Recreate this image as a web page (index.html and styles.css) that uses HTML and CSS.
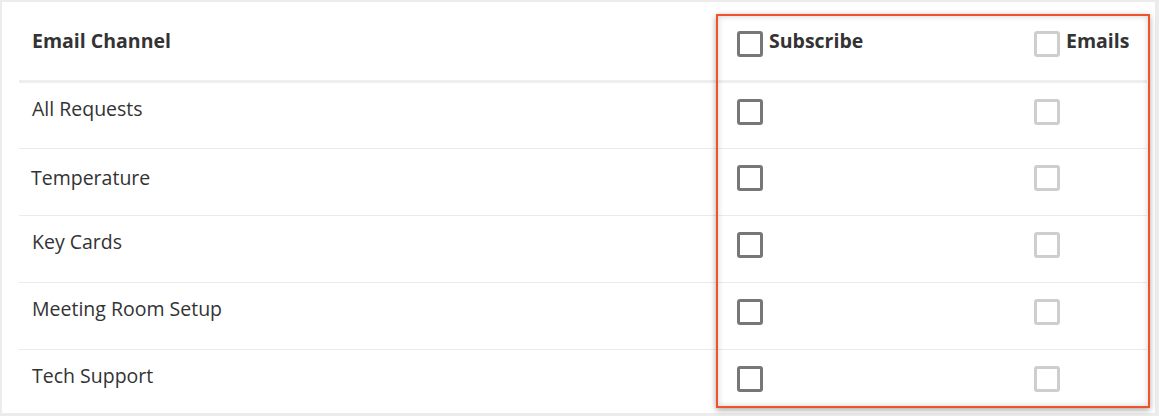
FILE: index.html
```html
<!DOCTYPE html>
<html>
<head>
<meta charset="utf-8">
<link rel="stylesheet" href="styles.css">
</head>
<body>
<div class="panel">
  <div class="table">
    <div class="row head">
      <div class="cell name">Email Channel</div>
      <div class="cell sub"><span class="box dark"></span><span class="label">Subscribe</span></div>
      <div class="cell em"><span class="box light"></span><span class="label">Emails</span></div>
    </div>
    <div class="row first">
      <div class="cell name">All Requests</div>
      <div class="cell sub"><span class="box dark"></span></div>
      <div class="cell em"><span class="box light"></span></div>
    </div>
    <div class="row second">
      <div class="cell name">Temperature</div>
      <div class="cell sub"><span class="box dark"></span></div>
      <div class="cell em"><span class="box light"></span></div>
    </div>
    <div class="row">
      <div class="cell name">Key Cards</div>
      <div class="cell sub"><span class="box dark"></span></div>
      <div class="cell em"><span class="box light"></span></div>
    </div>
    <div class="row">
      <div class="cell name">Meeting Room Setup</div>
      <div class="cell sub"><span class="box dark"></span></div>
      <div class="cell em"><span class="box light"></span></div>
    </div>
    <div class="row last">
      <div class="cell name">Tech Support</div>
      <div class="cell sub"><span class="box dark"></span></div>
      <div class="cell em"><span class="box light"></span></div>
    </div>
  </div>
  <div class="highlight"></div>
</div>
</body>
</html>
```

FILE: styles.css
```css
html, body {
  margin: 0;
  padding: 0;
  background: #ececec;
}
body {
  padding: 2px 4px 3px 2px;
  font-family: "Open Sans", "Liberation Sans", sans-serif;
  color: #333;
}
.panel {
  position: relative;
  background: #fff;
  height: 411px;
  padding: 0 8px 0 17px;
}
.table {
  display: flex;
  flex-direction: column;
}
.row {
  display: grid;
  grid-template-columns: 705px 297px 1fr;
  height: 66px;
  border-bottom: 1px solid #ebebeb;
}
.row.head {
  height: 78px;
  border-bottom: 3px solid #eeeeee;
}
.row.first {
  height: 65px;
}
.row.last {
  border-bottom: none;
  height: 63px;
}
.cell {
  padding: 14px 13px 0;
  font-size: 19.5px;
  line-height: 24px;
  display: flex;
  align-items: flex-start;
}
.head .cell {
  padding-top: 27px;
  font-weight: 700;
}
.second .name {
  padding-top: 17px;
  padding-left: 12px;
}
.box {
  box-sizing: border-box;
  width: 26px;
  height: 26px;
  border: 3px solid #777;
  border-radius: 3px;
  margin-top: 2px;
  flex: none;
}
.head .box {
  margin-top: 2px;
}
.box.light {
  border-color: #cecece;
}
.label {
  margin-left: 6px;
}
.highlight {
  position: absolute;
  left: 714px;
  top: 12px;
  width: 430px;
  height: 390px;
  border: 2px solid #f0532b;
  box-shadow: 0 2px 6px rgba(0,0,0,0.35), inset 0 0 6px rgba(0,0,0,0.18);
  pointer-events: none;
}
```
